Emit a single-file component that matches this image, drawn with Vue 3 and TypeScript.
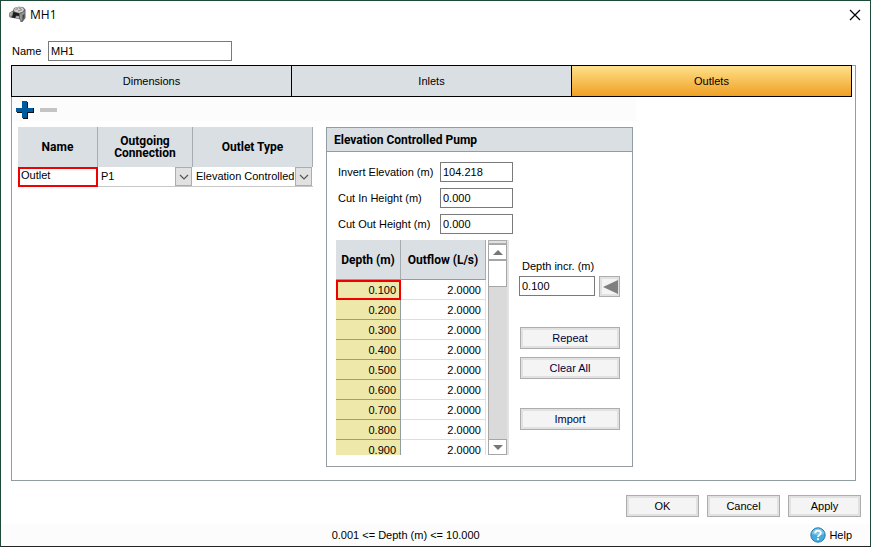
<script setup lang="ts">
import { ref } from 'vue'

interface DepthRow {
  depth: string
  outflow: string
}

const name = ref('MH1')
const outletName = ref('Outlet')
const connection = ref('P1')
const outletType = ref('Elevation Controlled Pump')
const increment = ref('0.100')
const tabs = ['Dimensions', 'Inlets', 'Outlets']
const activeTab = ref('Outlets')

const fields = ref([
  { id: 'invert', label: 'Invert Elevation (m)', value: '104.218' },
  { id: 'cut-in', label: 'Cut In Height (m)', value: '0.000' },
  { id: 'cut-out', label: 'Cut Out Height (m)', value: '0.000' },
])

const rows: DepthRow[] = Array.from({ length: 9 }, (_, i) => ({
  depth: ((i + 1) / 10).toFixed(3),
  outflow: '2.0000',
}))
</script>

<template>
  <div class="window">
    <header class="titlebar">
      <svg class="app-icon" width="18" height="18" viewBox="0 0 18 18" aria-hidden="true">
        <path d="M0 7 L4 4.5 L5 2 L9 .8 L14 1 L16.5 3.5 L16.5 12 L13.5 16 L11.5 16 L11 13.5 L7 12.5 L1 11.5 L0 10 Z" fill="#666" />
        <path d="M5 3 L8 1.2 L13.5 1.5 L15 3.5 L14 5.5 L10 7 L5.5 5.5 Z" fill="#cfcfcf" />
        <path d="M6.5 3.5 L9 2.5 M9 5 L13 3.5 M10 2 L12 3" stroke="#888" stroke-width="1" />
        <path d="M0 7 L4 5.5 L3.5 9 L1 11 Z" fill="#a8a8a8" />
        <path d="M4.5 6 L10 7.5 L10 10 L7 9.5 L6 12 L3 11.5 Z" fill="#1c1c1c" />
        <path d="M7.5 10 L10 10.5 L10 12.5 L7 12 Z" fill="#bbb" />
        <path d="M11 8 L15.5 5.5 L15.5 11 L12.5 15 L11 13 Z" fill="#929292" />
        <path d="M13.5 9 L15.5 8 L15.5 11 L13.5 14 Z" fill="#444" />
      </svg>
      <h1>MH1</h1>
      <button class="close" type="button" aria-label="Close">
        <svg width="12" height="12" viewBox="0 0 12 12"><path d="M1 1 L11 11 M11 1 L1 11" stroke="#000" stroke-width="1.2" /></svg>
      </button>
    </header>

    <div class="name-row">
      <label for="node-name">Name</label>
      <input id="node-name" v-model="name" class="box" type="text" />
    </div>

    <main class="panel">
      <nav class="tabs">
        <button
          v-for="tab in tabs"
          :key="tab"
          type="button"
          class="tab"
          :class="{ active: tab === activeTab }"
          @click="activeTab = tab"
        >{{ tab }}</button>
      </nav>

      <div class="toolbar">
        <button type="button" aria-label="Add outlet">
          <svg width="18" height="18" viewBox="0 0 18 18">
            <path d="M7 1 H12 V7 H18 V12 H12 V18 H7 V12 H1 V7 H7 Z" fill="#111" />
            <path d="M6 0 H11 V7 H17 V11 H11 V17 H6 V11 H0 V7 H6 Z" fill="#005a9e" />
          </svg>
        </button>
        <button type="button" aria-label="Remove outlet">
          <svg width="18" height="18" viewBox="0 0 18 18"><path d="M0 7 H17 V11 H0 Z" fill="#c4c4c4" /></svg>
        </button>
      </div>

      <div class="content">
        <table class="outlets">
          <colgroup><col class="c-name" /><col class="c-conn" /><col class="c-type" /></colgroup>
          <thead>
            <tr><th>Name</th><th class="tight">Outgoing Connection</th><th>Outlet Type</th></tr>
          </thead>
          <tbody>
            <tr>
              <td class="selected"><input v-model="outletName" type="text" aria-label="Outlet name" /></td>
              <td>
                <div class="combo">
                  <select v-model="connection" aria-label="Outgoing connection"><option>P1</option></select>
                  <span class="arrow"><svg width="10" height="6" viewBox="0 0 10 6"><path d="M1 1 L5 5 L9 1" fill="none" stroke="#555" stroke-width="1.2" /></svg></span>
                </div>
              </td>
              <td>
                <div class="combo">
                  <select v-model="outletType" aria-label="Outlet type"><option>Elevation Controlled Pump</option></select>
                  <span class="arrow"><svg width="10" height="6" viewBox="0 0 10 6"><path d="M1 1 L5 5 L9 1" fill="none" stroke="#555" stroke-width="1.2" /></svg></span>
                </div>
              </td>
            </tr>
          </tbody>
        </table>

        <section class="group">
          <h2>Elevation Controlled Pump</h2>
          <div class="fields">
            <div v-for="f in fields" :key="f.id" class="field">
              <label :for="f.id">{{ f.label }}</label>
              <input :id="f.id" v-model="f.value" class="box" type="text" />
            </div>
          </div>

          <div class="curve">
            <div class="grid">
              <table class="depths">
                <colgroup><col class="c-depth" /><col class="c-flow" /></colgroup>
                <thead><tr><th>Depth (m)</th><th>Outflow (L/s)</th></tr></thead>
                <tbody>
                  <tr v-for="(row, i) in rows" :key="row.depth">
                    <td class="depth" :class="{ current: i === 0 }">{{ row.depth }}</td>
                    <td>{{ row.outflow }}</td>
                  </tr>
                </tbody>
              </table>
              <div class="scrollbar">
                <span class="cap"></span>
                <button type="button" aria-label="Scroll up"><svg width="10" height="5" viewBox="0 0 10 5"><path d="M0 5 L5 0 L10 5 Z" fill="#777" /></svg></button>
                <span class="thumb"></span>
                <span class="track"></span>
                <button type="button" aria-label="Scroll down"><svg width="10" height="5" viewBox="0 0 10 5"><path d="M0 0 L5 5 L10 0 Z" fill="#777" /></svg></button>
              </div>
            </div>

            <div class="tools">
              <label for="increment">Depth incr. (m)</label>
              <div class="increment">
                <input id="increment" v-model="increment" class="box" type="text" />
                <button class="push back" type="button" aria-label="Apply increment">
                  <svg width="15" height="14" viewBox="0 0 15 14"><path d="M0 7 L15 0 V14 Z" fill="#808080" /></svg>
                </button>
              </div>
              <div class="actions">
                <button class="push" type="button">Repeat</button>
                <button class="push" type="button">Clear All</button>
                <button class="push import" type="button">Import</button>
              </div>
            </div>
          </div>
        </section>
      </div>
    </main>

    <div class="dialog-buttons">
      <button class="push" type="button">OK</button>
      <button class="push" type="button">Cancel</button>
      <button class="push" type="button">Apply</button>
    </div>

    <footer class="status">
      <span class="range">0.001 &lt;= Depth (m) &lt;= 10.000</span>
      <a class="help" href="#help">
        <svg width="16" height="16" viewBox="0 0 16 16" aria-hidden="true">
          <circle cx="8" cy="8" r="7.2" fill="#48a9dc" stroke="#2779ad" />
          <path d="M2 7 A6 5.5 0 0 1 14 7 Q8 9 2 7 Z" fill="#7cc6ec" />
          <path d="M5.2 6.2 C5.2 2.8 10.8 2.9 10.8 6 C10.8 8 8 7.8 8 10" fill="none" stroke="#fff" stroke-width="1.8" />
          <circle cx="8" cy="12.2" r="1.1" fill="#fff" />
        </svg>
        Help
      </a>
    </footer>
  </div>
</template>

<style>
body {
  margin: 0;
}
</style>

<style scoped>
.window,
.window * {
  box-sizing: border-box;
}
.window {
  display: flex;
  flex-direction: column;
  min-height: 100vh;
  border: 1px solid #1d4b38;
  border-bottom-color: #222528;
  background: #fff;
  color: #000;
  font: 11px/14px "Liberation Sans", Arial, sans-serif;
}
button,
input,
select {
  margin: 0;
  padding: 0;
  border: 0;
  border-radius: 0;
  background: none;
  color: inherit;
  font: inherit;
}
svg {
  display: block;
}
.titlebar {
  display: flex;
  align-items: center;
  height: 28px;
  padding: 0 9px 0 8px;
}
.titlebar h1 {
  flex: 1;
  margin: 0 0 0 3px;
  font: 12px/16px "Open Sans", sans-serif;
}
.name-row {
  display: flex;
  align-items: center;
  gap: 8px;
  margin: 12px 11px 4px;
}
.name-row label {
  width: 28px;
}
.box {
  height: 20px;
  padding: 0 2px;
  border: 1px solid #7a7a7a;
  background: #fff;
}
.name-row .box {
  width: 184px;
}
.panel {
  flex: 1;
  display: flex;
  flex-direction: column;
  margin: 0 14px 0 10px;
  border: 1px solid #929ca3;
}
.tabs {
  display: flex;
  margin: -1px 3px 0 -1px;
}
.tab {
  flex: 1;
  height: 32px;
  border: 1px solid #000;
  background: #dadfe3;
}
.tab + .tab {
  margin-left: -1px;
}
.tab.active {
  background: linear-gradient(#fee08a, #f0a024);
}
.toolbar {
  display: flex;
  align-items: center;
  gap: 6px;
  width: 74%;
  height: 24px;
  padding: 2px 4px 0;
  background: #fcfcfc;
}
.content {
  flex: 1;
  display: flex;
  align-items: flex-start;
  gap: 13px;
  padding: 6px 6px 13px;
}
table {
  border-collapse: separate;
  border-spacing: 0;
  table-layout: fixed;
}
th {
  height: 40px;
  padding: 0;
  border-right: 1px solid #a5adb2;
  background: #dadfe3;
  font: 700 12px/14px Roboto, sans-serif;
}
td {
  height: 20px;
  padding: 0;
}
.outlets {
  width: 295px;
}
.outlets .tight {
  padding: 0 12px;
  line-height: 12px;
}
.c-name {
  width: 80px;
}
.c-conn {
  width: 95px;
}
.c-type {
  width: 120px;
}
.outlets td {
  padding-right: 1px;
  border-bottom: 1px solid #c8c8c8;
}
.outlets .selected {
  padding: 0;
  border: 2px solid #f00000;
}
.selected input {
  display: block;
  width: 100%;
  height: 16px;
  padding: 0 1px 4px;
}
.combo {
  position: relative;
  height: 19px;
}
.combo select {
  width: 100%;
  height: 19px;
  padding: 0 17px 2px 3px;
  appearance: none;
  overflow: hidden;
}
.arrow {
  position: absolute;
  top: 0;
  right: 0;
  display: grid;
  place-items: center;
  width: 17px;
  height: 19px;
  border: 1px solid #adadad;
  background: #e1e1e1;
  pointer-events: none;
}
.group {
  align-self: stretch;
  display: flex;
  flex-direction: column;
  width: 307px;
  border: 1px solid #929ca3;
}
.group h2 {
  margin: 0;
  padding: 5px 7px 4px;
  border-bottom: 1px solid #929ca3;
  background: #dadfe3;
  font: 700 12px/14px Roboto, sans-serif;
}
.fields {
  display: grid;
  gap: 6px;
  padding: 10px 11px 6px;
}
.field {
  display: grid;
  grid-template-columns: 102px 73px;
  align-items: center;
}
.curve {
  flex: 1;
  display: flex;
  gap: 10px;
  padding: 0 12px 11px 9px;
}
.grid {
  display: flex;
  align-items: flex-start;
  gap: 2px;
  height: 215px;
  overflow: hidden;
}
.depths {
  width: 150px;
}
.c-depth {
  width: 65px;
}
.c-flow {
  width: 85px;
}
.depths th {
  border-bottom: 1px solid #929ca3;
}
.depths td {
  padding-right: 4px;
  border-right: 1px solid #dadfe3;
  border-bottom: 1px solid #dadfe3;
  text-align: right;
}
.depths .depth {
  border-right-color: #929ca3;
  border-bottom-color: #929ca3;
  background: #eee8aa;
}
.depths .current {
  padding-right: 3px;
  border: 2px solid #f00000;
}
.scrollbar {
  display: flex;
  flex-direction: column;
  align-self: stretch;
  width: 21px;
  border-right: 2px solid #e3e3e3;
  background: #dadada;
}
.scrollbar .cap {
  height: 4px;
  border: 1px solid #adadad;
  background: #e1e1e1;
}
.scrollbar button,
.thumb {
  display: grid;
  place-items: center;
  height: 16px;
  border: 1px solid #a6a6a6;
  background: #fff;
}
.scrollbar .thumb {
  height: 27px;
}
.track {
  flex: 1;
  border-left: 1px solid #a6a6a6;
}
.tools {
  flex: 1;
  display: flex;
  flex-direction: column;
  padding-top: 19px;
}
.tools label {
  padding-left: 3px;
}
.increment {
  display: flex;
  justify-content: space-between;
  margin: 3px 0 30px;
}
.increment .box {
  width: 76px;
}
.push {
  height: 22px;
  border: 1px solid #adadad;
  background: #f4f4f4;
  box-shadow: inset 0 0 0 2px #e1e1e1;
}
.tools .push {
  color: #00003c;
}
.tools .back {
  display: grid;
  place-items: center;
  width: 21px;
  height: 21px;
  padding-left: 1px;
}
.actions {
  display: grid;
  gap: 8px;
  padding-left: 1px;
}
.import {
  margin-top: 21px;
}
.dialog-buttons {
  display: flex;
  justify-content: flex-end;
  gap: 8px;
  padding: 14px 9px 7px;
}
.dialog-buttons .push {
  width: 73px;
}
.status {
  display: flex;
  align-items: center;
  height: 22px;
  padding: 0 18px 0 0;
  background: #fcfcfc;
}
.range {
  flex: 1;
  text-align: center;
}
.help {
  display: flex;
  align-items: center;
  gap: 3px;
  color: inherit;
  text-decoration: none;
}
</style>
